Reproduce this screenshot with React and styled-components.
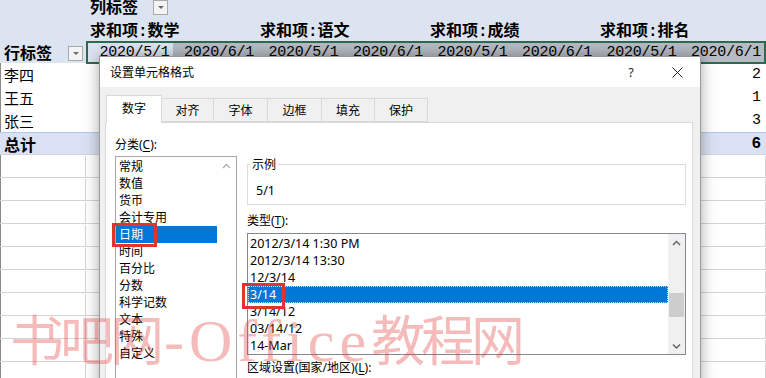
import React from "react";
import styled, { createGlobalStyle } from "styled-components";

const GlobalStyle = createGlobalStyle`
  html, body {
    margin: 0;
    padding: 0;
    background: #fff;
  }
`;

const Screen = styled.div`
  position: relative;
  width: 766px;
  height: 378px;
  overflow: hidden;
  background: #fff;
`;

/* ---------- spreadsheet ---------- */

const Sheet = styled.div`
  margin-top: -6px;
  font-family: "Liberation Mono", "Noto Sans CJK SC", monospace;
  font-size: 15px;
  color: #000;
  box-shadow: inset 1px 0 #8a8a8a;
`;

const Row = styled.div`
  display: flex;
  height: 23px;
  box-sizing: border-box;
  background: ${(p) => p.$bg || "transparent"};
  border-top: 1px solid ${(p) => p.$top || "transparent"};
  border-bottom: 1px solid ${(p) => p.$line || "transparent"};
`;

const Cell = styled.div`
  box-sizing: border-box;
  flex: none;
  width: ${(p) => p.$w || 85}px;
  height: 100%;
  display: flex;
  align-items: center;
  justify-content: ${(p) => (p.$right ? "flex-end" : "flex-start")};
  padding: ${(p) => (p.$right ? "0 4px 0 0" : "0 0 0 4px")};
  font-weight: ${(p) => (p.$bold ? 700 : 400)};
  font-size: ${(p) => (p.$bold ? "16px" : "15px")};
  border-right: 1px solid ${(p) => (p.$grid ? "#d4d4d4" : "transparent")};
  white-space: nowrap;
  overflow: visible;
`;

const FilterButton = styled.span`
  box-sizing: border-box;
  width: 15px;
  height: 15px;
  margin: auto 2px 1px auto;
  align-self: flex-end;
  border: 1px solid #a9a9a9;
  background: #f4f4f4;
  display: inline-flex;
  align-items: center;
  justify-content: center;
  &::after {
    content: "";
    border-left: 3px solid transparent;
    border-right: 3px solid transparent;
    border-top: 3px solid #6a6a6a;
  }
`;

const Selection = styled.div`
  box-sizing: border-box;
  flex: 1;
  display: flex;
  height: 23px;
  border: 2px solid #2d6b4f;
  background: #b7bbc3;
`;

const DateCell = styled.div`
  flex: 1;
  display: flex;
  align-items: center;
  justify-content: flex-end;
  padding-right: 3px;
  letter-spacing: -0.25px;
  background: ${(p) => (p.$active ? "#dde4f1" : "transparent")};
  white-space: nowrap;
`;

/* ---------- dialog ---------- */

const Dialog = styled.div`
  position: absolute;
  left: 99px;
  top: 56px;
  width: 602px;
  height: 360px;
  box-sizing: border-box;
  border: 1px solid #9a9a9a;
  background: #f0f0f0;
  box-shadow: 0 0 14px rgba(0, 0, 0, 0.35);
  display: flex;
  flex-direction: column;
  font-family: "Noto Sans", "Noto Sans CJK SC", sans-serif;
  font-size: 12px;
  color: #000;
`;

const TitleBar = styled.div`
  height: 30px;
  flex: none;
  background: #fff;
  display: flex;
  align-items: center;
  padding-left: 10px;
`;

const Title = styled.span`
  flex: 1;
`;

const TitleButton = styled.span`
  width: 46px;
  height: 30px;
  display: flex;
  align-items: center;
  justify-content: center;
  font-size: 12px;
  color: #222;
`;

const Body = styled.div`
  flex: 1;
  display: flex;
  flex-direction: column;
  padding: 8px 7px 0 5px;
`;

const TabRow = styled.div`
  display: flex;
  align-items: flex-end;
  height: 27px;
  margin-left: 2px;
  position: relative;
  z-index: 1;
`;

const Tab = styled.div`
  box-sizing: border-box;
  width: ${(p) => p.$w}px;
  height: ${(p) => (p.$active ? 28 : 24)}px;
  margin-bottom: ${(p) => (p.$active ? -1 : 0)}px;
  margin-left: -1px;
  border: 1px solid #d9d9d9;
  border-bottom: ${(p) => (p.$active ? "none" : "1px solid #d9d9d9")};
  background: ${(p) => (p.$active ? "#fff" : "#f0f0f0")};
  display: flex;
  align-items: center;
  justify-content: center;
  padding-bottom: ${(p) => (p.$active ? 3 : 0)}px;
`;

const Panel = styled.div`
  flex: 1;
  display: flex;
  gap: 10px;
  background: #fff;
  border: 1px solid #d9d9d9;
  padding: 13px 7px 0 9px;
`;

const LeftColumn = styled.div`
  width: 122px;
  flex: none;
  display: flex;
  flex-direction: column;
`;

const RightColumn = styled.div`
  width: 439px;
  flex: none;
  display: flex;
  flex-direction: column;
  padding-top: 20px;
`;

const Label = styled.div`
  line-height: 17px;
  height: 17px;
  margin-top: ${(p) => p.$mt || 0}px;
  u {
    text-decoration: underline;
    text-underline-offset: 2px;
  }
`;

const ListBox = styled.div`
  box-sizing: border-box;
  display: flex;
  height: ${(p) => p.$h}px;
  margin-top: ${(p) => p.$mt || 0}px;
  border: 1px solid ${(p) => p.$border};
  background: #fff;
`;

const Items = styled.div`
  flex: 1;
  padding-top: 1px;
`;

const Item = styled.div`
  position: relative;
  height: 17px;
  line-height: 17px;
  padding-left: ${(p) => p.$pad}px;
  font-size: ${(p) => p.$size || 12}px;
  background: ${(p) => (p.$selected ? "#0078d7" : "transparent")};
  color: ${(p) => (p.$selected ? "#fff" : "#000")};
  outline: ${(p) => (p.$focus ? "1px dotted #c8dcf2" : "none")};
  outline-offset: -1px;
  white-space: nowrap;
`;

const RedMark = styled.span`
  position: absolute;
  left: ${(p) => p.$l}px;
  top: ${(p) => p.$t}px;
  width: ${(p) => p.$w}px;
  height: ${(p) => p.$h}px;
  box-sizing: border-box;
  border: 3px solid #e2332f;
  z-index: 2;
`;

const ScrollBar = styled.div`
  width: ${(p) => p.$w}px;
  flex: none;
  display: flex;
  flex-direction: column;
  background: ${(p) => p.$bg};
`;

const ArrowBox = styled.div`
  height: 17px;
  flex: none;
  display: flex;
  align-items: center;
  justify-content: center;
`;

const Track = styled.div`
  flex: 1;
  padding-top: ${(p) => p.$offset}px;
`;

const Thumb = styled.div`
  height: 24px;
  margin: 0 1px;
  background: #cdcdcd;
`;

const Sample = styled.fieldset`
  box-sizing: border-box;
  margin: 0;
  min-width: 0;
  width: 439px;
  border: 1px solid #dcdcdc;
  padding: 0 8px 5px 8px;
  legend {
    margin-left: -6px;
    padding: 0 2px;
    line-height: 17px;
    font-size: 12px;
  }
`;

const SampleValue = styled.div`
  padding-top: 9px;
  line-height: 17px;
  font-size: 12.5px;
`;

/* ---------- watermark ---------- */

const Watermark = styled.div`
  position: absolute;
  left: 10px;
  top: 303px;
  line-height: 70px;
  color: rgba(226, 64, 64, 0.36);
  white-space: nowrap;
  pointer-events: none;
  z-index: 5;
`;

const MarkCJK = styled.span`
  font-family: "Noto Sans CJK SC", sans-serif;
  font-size: 54px;
  letter-spacing: -4px;
`;

const MarkLatin = styled.span`
  font-family: "Liberation Serif", serif;
  font-size: 60px;
  letter-spacing: 5px;
  margin-left: 4px;
`;

const Chevron = ({ down, color = "#606060" }) => (
  <svg width="9" height="6" viewBox="0 0 9 6">
    <polyline
      points={down ? "1,1.5 4.5,5 8,1.5" : "1,5 4.5,1.5 8,5"}
      fill="none"
      stroke={color}
      strokeWidth="1.4"
    />
  </svg>
);

const CloseIcon = () => (
  <svg width="11" height="11" viewBox="0 0 11 11">
    <path d="M0.5 0.5 L10.5 10.5 M10.5 0.5 L0.5 10.5" stroke="#222" strokeWidth="1" />
  </svg>
);

const dates = ["2020/5/1", "2020/6/1", "2020/5/1", "2020/6/1", "2020/5/1", "2020/6/1", "2020/5/1", "2020/6/1"];
const tabs = [
  ["数字", 56],
  ["对齐", 53],
  ["字体", 55],
  ["边框", 55],
  ["填充", 54],
  ["保护", 54],
];
const categories = ["常规", "数值", "货币", "会计专用", "日期", "时间", "百分比", "分数", "科学记数", "文本", "特殊", "自定义"];
const types = ["2012/3/14 1:30 PM", "2012/3/14 13:30", "12/3/14", "3/14", "3/14/12", "03/14/12", "14-Mar"];
const pivotRows = [
  ["李四", "2"],
  ["王五", "1"],
  ["张三", "3"],
];

const HEAD = "#dde4f1";

const EmptyCells = ({ count, grid }) =>
  Array.from({ length: count }, (_, i) => <Cell key={i} $grid={grid} />);

export default function App() {
  return (
    <Screen>
      <GlobalStyle />
      <Sheet>
        <Row $bg={HEAD}>
          <Cell $w={86} />
          <Cell $bold>
            列标签
            <FilterButton />
          </Cell>
          <EmptyCells count={7} />
        </Row>
        <Row $bg={HEAD}>
          <Cell $w={86} />
          <Cell $bold>求和项:数学</Cell>
          <Cell />
          <Cell $bold>求和项:语文</Cell>
          <Cell />
          <Cell $bold>求和项:成绩</Cell>
          <Cell />
          <Cell $bold>求和项:排名</Cell>
          <Cell />
        </Row>
        <Row $bg={HEAD}>
          <Cell $w={86} $bold>
            行标签
            <FilterButton />
          </Cell>
          <Selection>
            {dates.map((d, i) => (
              <DateCell key={i} $active={i === 0}>
                {d}
              </DateCell>
            ))}
          </Selection>
        </Row>
        {pivotRows.map(([name, value]) => (
          <Row key={name}>
            <Cell $w={86}>{name}</Cell>
            <EmptyCells count={7} />
            <Cell $right>{value}</Cell>
          </Row>
        ))}
        <Row $bg="#d9e1f2" $top="#b4c6e7" $line="#d4d4d4">
          <Cell $w={86} $bold>
            总计
          </Cell>
          <EmptyCells count={7} />
          <Cell $right $bold>
            6
          </Cell>
        </Row>
        {Array.from({ length: 10 }, (_, r) => (
          <Row key={r} $line="#d4d4d4">
            <Cell $w={86} $grid />
            <EmptyCells count={8} grid />
          </Row>
        ))}
      </Sheet>

      <Dialog>
        <TitleBar>
          <Title>设置单元格格式</Title>
          <TitleButton>?</TitleButton>
          <TitleButton>
            <CloseIcon />
          </TitleButton>
        </TitleBar>
        <Body>
          <TabRow>
            {tabs.map(([name, w], i) => (
              <Tab key={name} $w={w} $active={i === 0}>
                {name}
              </Tab>
            ))}
          </TabRow>
          <Panel>
            <LeftColumn>
              <Label>
                分类(<u>C</u>):
              </Label>
              <ListBox $h={240} $mt={3} $border="#a8a8a8">
                <Items>
                  {categories.map((c) => (
                    <Item key={c} $pad={3} $selected={c === "日期"}>
                      {c}
                      {c === "日期" && <RedMark $l={-4} $t={-3} $w={45} $h={24} />}
                    </Item>
                  ))}
                </Items>
                <ScrollBar $w={19} $bg="#fff">
                  <ArrowBox>
                    <Chevron color="#b0b0b0" />
                  </ArrowBox>
                </ScrollBar>
              </ListBox>
            </LeftColumn>
            <RightColumn>
              <Sample>
                <legend>示例</legend>
                <SampleValue>5/1</SampleValue>
              </Sample>
              <Label $mt={7}>
                类型(<u>T</u>):
              </Label>
              <ListBox $h={122} $mt={4} $border="#828790">
                <Items>
                  {types.map((t) => (
                    <Item key={t} $pad={2} $size={12.5} $selected={t === "3/14"} $focus={t === "3/14"}>
                      {t}
                      {t === "3/14" && <RedMark $l={-6} $t={-3} $w={43} $h={26} />}
                    </Item>
                  ))}
                </Items>
                <ScrollBar $w={17} $bg="#f0f0f0">
                  <ArrowBox>
                    <Chevron />
                  </ArrowBox>
                  <Track $offset={42}>
                    <Thumb />
                  </Track>
                  <ArrowBox>
                    <Chevron down />
                  </ArrowBox>
                </ScrollBar>
              </ListBox>
              <Label $mt={4}>
                区域设置(国家/地区)(<u>L</u>):
              </Label>
            </RightColumn>
          </Panel>
        </Body>
      </Dialog>

      <Watermark>
        <MarkCJK>书吧网</MarkCJK>
        <MarkLatin>-Office</MarkLatin>
        <MarkCJK>教程网</MarkCJK>
      </Watermark>
    </Screen>
  );
}
